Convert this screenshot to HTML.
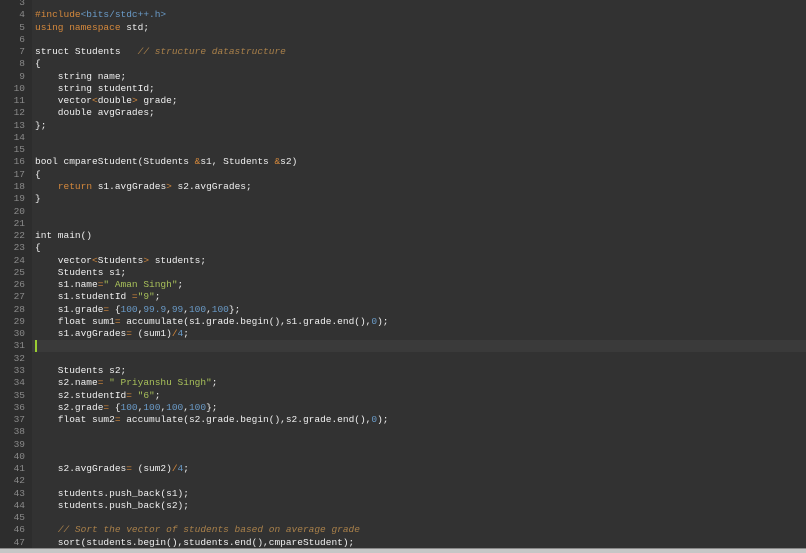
<!DOCTYPE html>
<html><head><meta charset="utf-8"><style>
html,body{margin:0;padding:0;width:806px;height:552px;overflow:hidden;background:#323232;}
#g{position:absolute;left:0;top:0;width:32px;height:548px;background:#2d2d2d;}
#hl{position:absolute;left:32px;top:340px;width:774px;height:12px;background:#3a3a3a;}
#cur{position:absolute;left:35px;top:340px;width:2px;height:12px;background:#9acd32;}
#bar{position:absolute;left:0;top:548px;width:806px;height:4px;background:#c6c6c6;border-top:1px solid #888;}
pre{position:absolute;top:-3px;margin:0;font-family:"Liberation Mono",monospace;font-size:9.5px;line-height:12.26px;}
#n{left:0;width:25px;text-align:right;color:#8a8a8a;}
#c{left:35px;color:#f0f0f0;}
.k{color:#d4883c}.o{color:#d4883c}.cm{color:#a9804a;font-style:italic}.s{color:#a8c05a}.d{color:#6a9bc8}.a{color:#d4883c}
</style></head><body>
<div id="g"></div><div id="hl"></div><div id="cur"></div>
<pre id="n">3
4
5
6
7
8
9
10
11
12
13
14
15
16
17
18
19
20
21
22
23
24
25
26
27
28
29
30
31
32
33
34
35
36
37
38
39
40
41
42
43
44
45
46
47</pre>
<pre id="c">&#8203;
<span class="k">#include</span><span class="d">&lt;bits/stdc++.h&gt;</span>
<span class="k">using namespace</span> std;

struct Students   <span class="cm">// structure datastructure</span>
{
    string name;
    string studentId;
    vector<span class="o">&lt;</span>double<span class="o">&gt;</span> grade;
    double avgGrades;
};


bool cmpareStudent(Students <span class="o">&amp;</span>s1, Students <span class="o">&amp;</span>s2)
{
    <span class="k">return</span> s1.avgGrades<span class="o">&gt;</span> s2.avgGrades;
}


int main()
{
    vector<span class="o">&lt;</span>Students<span class="o">&gt;</span> students;
    Students s1;
    s1.name<span class="o">=</span><span class="s">" Aman Singh"</span>;
    s1.studentId <span class="o">=</span><span class="s">"9"</span>;
    s1.grade<span class="o">=</span> {<span class="d">100</span>,<span class="d">99.9</span>,<span class="d">99</span>,<span class="d">100</span>,<span class="d">100</span>};
    float sum1<span class="o">=</span> accumulate(s1.grade.begin(),s1.grade.end(),<span class="d">0</span>);
    s1.avgGrades<span class="o">=</span> (sum1)<span class="o">/</span><span class="d">4</span>;


    Students s2;
    s2.name<span class="o">=</span> <span class="s">" Priyanshu Singh"</span>;
    s2.studentId<span class="o">=</span> <span class="s">"6"</span>;
    s2.grade<span class="o">=</span> {<span class="d">100</span>,<span class="d">100</span>,<span class="d">100</span>,<span class="d">100</span>};
    float sum2<span class="o">=</span> accumulate(s2.grade.begin(),s2.grade.end(),<span class="d">0</span>);



    s2.avgGrades<span class="o">=</span> (sum2)<span class="o">/</span><span class="d">4</span>;

    students.push_back(s1);
    students.push_back(s2);

    <span class="cm">// Sort the vector of students based on average grade</span>
    sort(students.begin(),students.end(),cmpareStudent);</pre>
<div id="bar"></div>
</body></html>
